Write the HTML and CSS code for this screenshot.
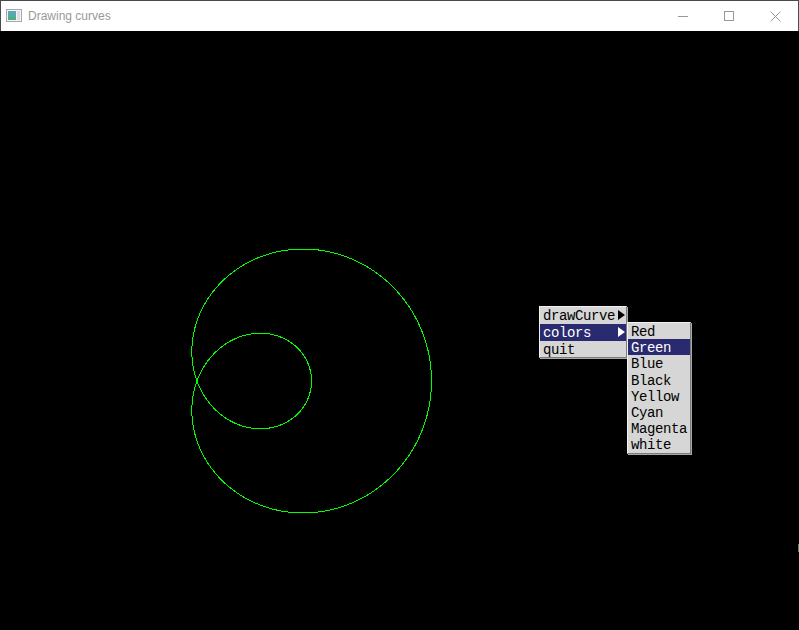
FILE: index.html
```html
<!DOCTYPE html>
<html>
<head>
<meta charset="utf-8">
<title>Drawing curves</title>
<link rel="stylesheet" href="styles.css">
</head>
<body>
<div class="window">
  <div class="titlebar">
    <svg class="app-icon" width="16" height="13" viewBox="0 0 16 13">
      <defs>
        <linearGradient id="g" x1="0" y1="0" x2="0" y2="1">
          <stop offset="0" stop-color="#5ea7c4"/>
          <stop offset="1" stop-color="#4fae7a"/>
        </linearGradient>
      </defs>
      <rect x="0.5" y="0.5" width="15" height="12" fill="#f4f4f4" stroke="#a8a8a8"/>
      <rect x="2" y="2" width="8" height="9" fill="url(#g)"/>
      <rect x="11" y="2" width="3" height="9" fill="#dcdcea"/>
    </svg>
    <span class="title">Drawing curves</span>
    <div class="controls">
      <div class="ctl"><svg width="10" height="10" viewBox="0 0 10 10"><path d="M0 5.5H10" stroke="#999" stroke-width="1"/></svg></div>
      <div class="ctl"><svg width="10" height="10" viewBox="0 0 10 10"><rect x="0.5" y="0.5" width="9" height="9" fill="none" stroke="#999"/></svg></div>
      <div class="ctl"><svg width="11" height="11" viewBox="0 0 11 11"><path d="M0.5 0.5L10.5 10.5M10.5 0.5L0.5 10.5" stroke="#999" stroke-width="1"/></svg></div>
    </div>
  </div>
  <div class="canvas">
    <svg class="plot" width="799" height="599" viewBox="0 0 799 599">
      <path id="curve" d="" fill="none" stroke="#00ff00" stroke-width="1" shape-rendering="crispEdges"/>
    </svg>
    <span class="edge-mark"></span>
    <div class="menu main-menu">
      <div class="item">drawCurve<span class="arrow"></span></div>
      <div class="item active">colors<span class="arrow"></span></div>
      <div class="item last">quit</div>
    </div>
    <div class="menu sub-menu">
      <div class="item">Red</div>
      <div class="item active">Green</div>
      <div class="item">Blue</div>
      <div class="item">Black</div>
      <div class="item">Yellow</div>
      <div class="item">Cyan</div>
      <div class="item">Magenta</div>
      <div class="item">white</div>
    </div>
  </div>
</div>
<script src="script.js"></script>
</body>
</html>
```

FILE: styles.css
```css
html, body {
  margin: 0;
  padding: 0;
  background: #000;
  overflow: hidden;
}
.window {
  width: 799px;
  height: 630px;
  display: flex;
  flex-direction: column;
}
.titlebar {
  height: 30px;
  background: #fff;
  border-top: 1px solid #4a4a4a;
  border-left: 1px solid #4a4a4a;
  border-right: 1px solid #4a4a4a;
  display: flex;
  align-items: center;
  box-sizing: content-box;
}
.app-icon {
  margin-left: 5px;
  margin-top: -1px;
  flex: none;
}
.title {
  margin-left: 6px;
  font-family: "Liberation Sans", "DejaVu Sans", sans-serif;
  font-size: 12px;
  color: #999;
  margin-top: -1px;
}
.controls {
  margin-left: auto;
  display: flex;
  height: 30px;
}
.ctl {
  width: 46px;
  height: 30px;
  display: flex;
  align-items: center;
  justify-content: center;
}
.ctl svg {
  display: block;
}
.canvas {
  position: relative;
  flex: 1;
  background: #000;
}
.plot {
  display: block;
}
.edge-mark {
  position: absolute;
  right: 0;
  top: 513px;
  width: 1px;
  height: 8px;
  background: #5a8a5a;
}
.menu {
  position: absolute;
  background: #d6d6d6;
  border-top: 1px solid #f2f2f2;
  border-left: 1px solid #f2f2f2;
  border-right: 1px solid #7a7a7a;
  border-bottom: 1px solid #7a7a7a;
  box-shadow: 1px 1px 0 #a9a9a9;
  font-family: "Liberation Mono", "DejaVu Sans Mono", monospace;
  font-size: 14px;
  letter-spacing: -0.4px;
  color: #000;
}
.main-menu {
  left: 539px;
  top: 275px;
  width: 86px;
}
.sub-menu {
  left: 627px;
  top: 291px;
  width: 62px;
}
.item {
  position: relative;
  box-sizing: border-box;
  height: 16.2px;
  line-height: 16px;
  padding-top: 1px;
  padding-left: 3px;
  white-space: nowrap;
}
.main-menu .item {
  height: 17px;
}
.main-menu .item.last {
  height: 16px;
}
.item.active {
  background: #292a6f;
  color: #fff;
}
.arrow {
  position: absolute;
  right: 1px;
  top: 3px;
  width: 0;
  height: 0;
  border-top: 5px solid transparent;
  border-bottom: 5px solid transparent;
  border-left: 7px solid #000;
}
.item.active .arrow {
  border-left-color: #fff;
}
```

FILE: script.js
```js
(function () {
  var p = document.getElementById('curve');
  var cx = 197, cy = 350, a = 174.5, b = 60;
  var d = '';
  var n = 900;
  for (var i = 0; i <= n; i++) {
    var t = i / n * 2 * Math.PI;
    var r = b + a * Math.cos(t);
    var x = cx + r * Math.cos(t);
    var y = cy - r * Math.sin(t);
    d += (i ? 'L' : 'M') + x.toFixed(2) + ' ' + y.toFixed(2);
  }
  p.setAttribute('d', d);
})();
```
